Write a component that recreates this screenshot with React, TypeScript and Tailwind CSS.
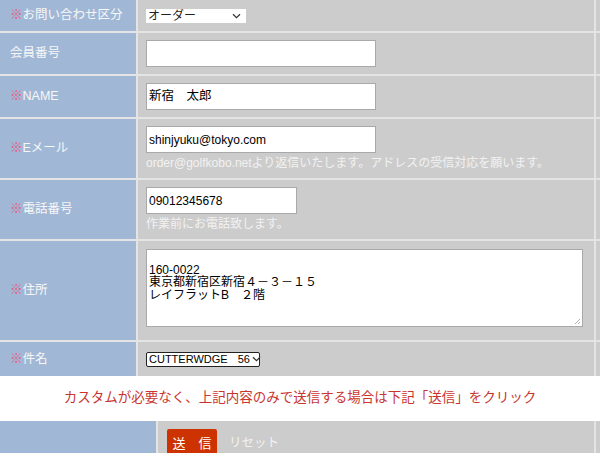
import React from "react";

const font = { fontFamily: '"Liberation Sans", "Noto Sans CJK JP", sans-serif' };

function Label({ req, text }: { req?: boolean; text: string }) {
  return (
    <div className="w-[136px] shrink-0 bg-[#a1b7d6] flex items-center pl-[10px] text-[12.5px] text-[#f7f7f7]">
      {req && <span className="text-[#e9577f]">※</span>}
      <span>{text}</span>
    </div>
  );
}

function Row({ h, children, label, req }: { h: string; children: React.ReactNode; label: string; req?: boolean }) {
  return (
    <div className={`flex gap-[2px] ${h}`}>
      <Label req={req} text={label} />
      <div className="flex-1 bg-[#cccccc] pl-[8px] flex flex-col justify-center">{children}</div>
      <div className="w-[4px] bg-[#cccccc]" />
    </div>
  );
}

function Chevron() {
  return (
    <svg width="9" height="6" viewBox="0 0 9 6" className="shrink-0">
      <path d="M1 1.2 L4.5 4.6 L8 1.2" fill="none" stroke="#333" strokeWidth="1.2" />
    </svg>
  );
}

export default function App() {
  return (
    <div className="w-[600px] h-[453px] overflow-hidden bg-white" style={font}>
      <div className="flex flex-col gap-[2px] bg-[#e4e4e4]">
        <Row h="h-[31px]" label="お問い合わせ区分" req>
          <div className="w-[100px] h-[14px] bg-white flex items-center justify-between pl-[2px] pr-[5px] text-[12px] leading-none text-[#222]">
            <span>オーダー</span>
            <Chevron />
          </div>
        </Row>
        <Row h="h-[41px]" label="会員番号">
          <div className="w-[230px] h-[27px] bg-white border border-[#a9a9a9]" />
        </Row>
        <Row h="h-[41px]" label="NAME" req>
          <div className="w-[230px] h-[27px] bg-white border border-[#a9a9a9] flex items-center pl-[2px] text-[12.5px] text-black">
            新宿　太郎
          </div>
        </Row>
        <Row h="h-[59px]" label="Eメール" req>
          <div className="flex flex-col justify-start h-full pt-[7px]">
            <div className="w-[230px] h-[27px] bg-white border border-[#a9a9a9] flex items-center pl-[2px] text-[12px] text-black">
              shinjyuku@tokyo.com
            </div>
            <div className="text-[12px] text-[#f2f2f2] mt-[2px] leading-[16px] whitespace-nowrap">
              order@golfkobo.netより返信いたします。アドレスの受信対応を願います。
            </div>
          </div>
        </Row>
        <Row h="h-[59px]" label="電話番号" req>
          <div className="flex flex-col justify-start h-full pt-[7px]">
            <div className="w-[151px] h-[27px] bg-white border border-[#a9a9a9] flex items-center pl-[2px] text-[12px] text-black">
              09012345678
            </div>
            <div className="text-[12px] text-[#f2f2f2] mt-[2px] leading-[16px]">作業前にお電話致します。</div>
          </div>
        </Row>
        <Row h="h-[99px]" label="住所" req>
          <div className="flex flex-col justify-start h-full pt-[8px]">
            <div className="relative w-[437px] h-[78px] bg-white border border-[#a9a9a9] px-[2px] pt-[1px] text-[12px] leading-[12.5px] text-black whitespace-pre">
              {"\n160-0022\n東京都新宿区新宿４－３－１５\nレイフラットB　２階"}
              <svg width="7" height="7" viewBox="0 0 7 7" className="absolute right-[1px] bottom-[1px]">
                <path d="M6 1 L1 6 M6 4 L4 6" stroke="#999" strokeWidth="0.8" />
              </svg>
            </div>
          </div>
        </Row>
        <Row h="h-[34px]" label="件名" req>
          <div className="w-[114px] h-[15px] bg-white border border-[#222] rounded-[2px] flex items-center pl-[2px] text-[11px] leading-none text-black whitespace-nowrap">
            <span>CUTTERWDGE</span>
            <span className="ml-[10px]">56</span>
            <span className="ml-[2px]">
              <Chevron />
            </span>
          </div>
        </Row>
      </div>
      <div className="h-[45px] bg-white flex items-center justify-center text-[13.5px] text-[#c8352f]">
        カスタムが必要なく、上記内容のみで送信する場合は下記「送信」をクリック
      </div>
      <div className="flex gap-[2px] h-[40px] bg-[#e4e4e4]">
        <div className="w-[156px] bg-[#a1b7d6]" />
        <div className="flex-1 bg-[#cccccc] pl-[9px] pt-[8px] flex items-start gap-[12px]">
          <div className="w-[50px] h-[32px] bg-[#cc3300] rounded-t-[2px] flex items-center justify-center text-white text-[13px] leading-none pb-[4px]">
            送　信
          </div>
          <div className="text-[12.5px] text-[#f2f2f2] pt-[8px] leading-none">リセット</div>
        </div>
        <div className="w-[4px] bg-[#cccccc]" />
      </div>
    </div>
  );
}
